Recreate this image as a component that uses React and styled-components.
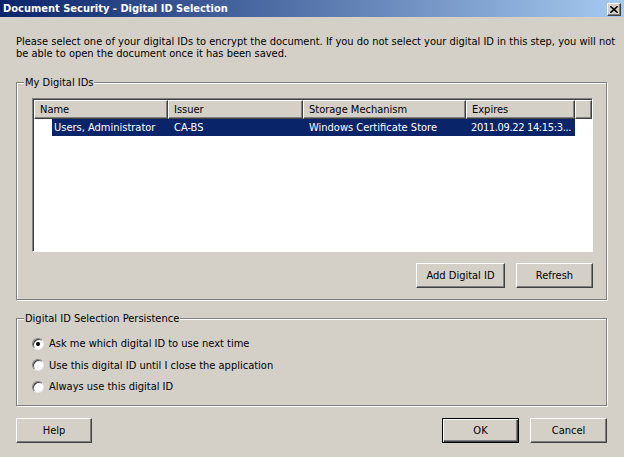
import React, { useState } from "react";
import styled, { createGlobalStyle } from "styled-components";

const GlobalStyle = createGlobalStyle`
  html, body {
    margin: 0;
    padding: 0;
    background: #d4d0c8;
  }
  body {
    font-family: "DejaVu Sans Condensed", "Liberation Sans", sans-serif;
    font-size: 11px;
    color: #000;
  }
`;

const Dialog = styled.div`
  width: 624px;
  height: 457px;
  background: #d4d0c8;
  display: flex;
  flex-direction: column;
  overflow: hidden;
`;

const TitleBar = styled.div`
  height: 17px;
  display: flex;
  align-items: center;
  justify-content: space-between;
  padding: 0 3px 0 3px;
  background: linear-gradient(to right, #0a246a, #a6caf0);
`;

const TitleText = styled.span`
  color: #fff;
  font-weight: bold;
  font-size: 11px;
`;

const CloseButton = styled.div`
  width: 12px;
  height: 11px;
  margin-top: 1px;
  display: flex;
  align-items: center;
  justify-content: center;
  background: #d4d0c8;
  border: 1px solid;
  border-color: #fff #404040 #404040 #fff;
  box-shadow: inset -1px -1px #808080;
`;

const Body = styled.div`
  flex: 1;
  display: flex;
  flex-direction: column;
  padding: 19px 17px 0 16px;
`;

const Intro = styled.p`
  margin: 0;
  line-height: 12px;
  white-space: nowrap;
`;

const Group = styled.div`
  position: relative;
  margin-top: ${(p) => p.$top}px;
  height: ${(p) => p.$height}px;
  border: 1px solid #808080;
  box-shadow: inset 1px 1px #fff, 1px 1px #fff;
  display: flex;
  flex-direction: column;
  padding: ${(p) => p.$pad};
  box-sizing: border-box;
`;

const Legend = styled.span`
  position: absolute;
  top: -6px;
  left: 7px;
  padding: 0 1px;
  background: #d4d0c8;
  line-height: 12px;
`;

const ListBox = styled.div`
  height: 154px;
  background: #fff;
  border: 1px solid;
  border-color: #808080 #fff #fff #808080;
  box-shadow: inset 1px 1px #404040;
  box-sizing: border-box;
  padding: 1px 0 0 1px;
  display: flex;
  flex-direction: column;
`;

const HeaderRow = styled.div`
  display: flex;
  height: 19px;
`;

const HeaderCell = styled.div`
  width: ${(p) => p.$w}px;
  flex: ${(p) => (p.$fill ? 1 : "none")};
  box-sizing: border-box;
  background: #d4d0c8;
  border: 1px solid;
  border-color: #fff #404040 #404040 #fff;
  box-shadow: inset -1px -1px #808080;
  padding-left: 5px;
  display: flex;
  align-items: center;
  white-space: nowrap;
`;

const Row = styled.div`
  display: flex;
  height: 17px;
`;

const Cell = styled.div`
  width: ${(p) => p.$w}px;
  box-sizing: border-box;
  padding-left: ${(p) => p.$pad ?? 6}px;
  display: flex;
  align-items: center;
  white-space: nowrap;
  overflow: hidden;
  letter-spacing: ${(p) => (p.$tight ? "-0.35px" : "normal")};
  background: ${(p) => (p.$selected ? "#0a246a" : "transparent")};
  color: ${(p) => (p.$selected ? "#fff" : "#000")};
`;

const Indent = styled.div`
  width: 18px;
`;

const ButtonRow = styled.div`
  display: flex;
  justify-content: ${(p) => p.$justify || "flex-end"};
  gap: ${(p) => p.$gap || 0}px;
  margin-top: ${(p) => p.$top || 0}px;
  padding-right: ${(p) => p.$right || 0}px;
`;

const Button = styled.button`
  width: ${(p) => p.$w}px;
  height: 25px;
  box-sizing: border-box;
  font: inherit;
  color: #000;
  background: #d4d0c8;
  border: 1px solid;
  border-color: ${(p) => (p.$default ? "#000" : "#fff #404040 #404040 #fff")};
  box-shadow: ${(p) =>
    p.$default
      ? "inset 1px 1px #fff, inset -1px -1px #404040, inset -2px -2px #808080"
      : "inset -1px -1px #808080"};
  padding: 0;
  cursor: default;
`;

const Spacer = styled.div`
  flex: 1;
`;

const RadioList = styled.div`
  display: flex;
  flex-direction: column;
  gap: 8.5px;
`;

const RadioLabel = styled.label`
  display: flex;
  align-items: center;
  gap: 5px;
  height: 13px;
`;

const RadioCircle = styled.span`
  width: 12px;
  height: 12px;
  box-sizing: border-box;
  border-radius: 50%;
  background: #fff;
  border: 1px solid;
  border-color: #808080 #e8e8e8 #e8e8e8 #808080;
  box-shadow: inset 1px 1px #404040;
  display: flex;
  align-items: center;
  justify-content: center;
  &::after {
    content: "";
    width: 4px;
    height: 4px;
    border-radius: 50%;
    background: ${(p) => (p.$checked ? "#000" : "transparent")};
  }
`;

const columns = [
  { label: "Name", w: 134 },
  { label: "Issuer", w: 135 },
  { label: "Storage Mechanism", w: 163 },
  { label: "Expires", w: 109 },
];

const options = [
  "Ask me which digital ID to use next time",
  "Use this digital ID until I close the application",
  "Always use this digital ID",
];

export default function App() {
  const [choice, setChoice] = useState(0);

  return (
    <Dialog>
      <GlobalStyle />
      <TitleBar>
        <TitleText>Document Security - Digital ID Selection</TitleText>
        <CloseButton>
          <svg width="8" height="7" viewBox="0 0 8 7">
            <path d="M0 0 L8 7 M8 0 L0 7" stroke="#000" strokeWidth="1.6" />
          </svg>
        </CloseButton>
      </TitleBar>
      <Body>
        <Intro>
          Please select one of your digital IDs to encrypt the document. If you do not select your
          digital ID in this step, you will not
          <br />
          be able to open the document once it has been saved.
        </Intro>

        <Group $top={22} $height={218} $pad="15px 13px 0 15px">
          <Legend>My Digital IDs</Legend>
          <ListBox>
            <HeaderRow>
              {columns.map((c) => (
                <HeaderCell key={c.label} $w={c.w}>
                  {c.label}
                </HeaderCell>
              ))}
              <HeaderCell $fill />
            </HeaderRow>
            <Row>
              <Indent />
              <Cell $w={116} $pad={2} $selected>
                Users, Administrator
              </Cell>
              <Cell $w={135} $selected>
                CA-BS
              </Cell>
              <Cell $w={163} $selected>
                Windows Certificate Store
              </Cell>
              <Cell $w={109} $pad={5} $tight $selected>
                2011.09.22 14:15:3...
              </Cell>
            </Row>
          </ListBox>
          <ButtonRow $top={11} $gap={11}>
            <Button $w={89}>Add Digital ID</Button>
            <Button $w={77}>Refresh</Button>
          </ButtonRow>
        </Group>

        <Group $top={18} $height={88} $pad="18px 0 0 15px">
          <Legend>Digital ID Selection Persistence</Legend>
          <RadioList>
            {options.map((o, i) => (
              <RadioLabel key={o} onClick={() => setChoice(i)}>
                <RadioCircle $checked={choice === i} />
                {o}
              </RadioLabel>
            ))}
          </RadioList>
        </Group>

        <ButtonRow $top={12} $gap={11} $right={-2}>
          <Button $w={76}>Help</Button>
          <Spacer />
          <Button $w={77} $default>
            OK
          </Button>
          <Button $w={77}>Cancel</Button>
        </ButtonRow>
      </Body>
    </Dialog>
  );
}
